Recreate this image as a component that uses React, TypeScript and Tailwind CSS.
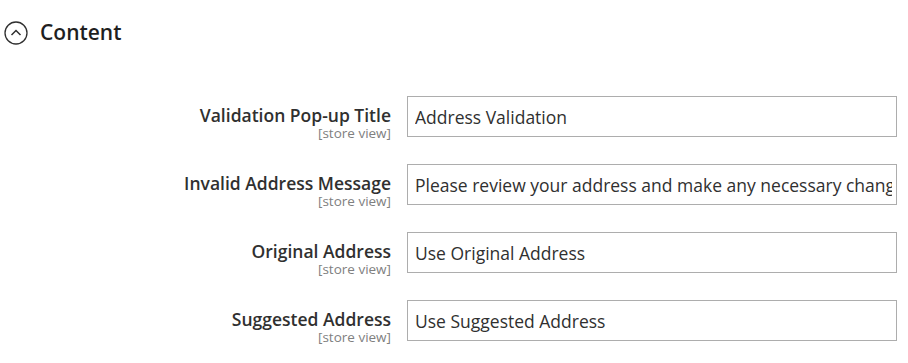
import React from "react";

const rows = [
  { label: "Validation Pop-up Title", value: "Address Validation" },
  { label: "Invalid Address Message", value: "Please review your address and make any necessary changes." },
  { label: "Original Address", value: "Use Original Address" },
  { label: "Suggested Address", value: "Use Suggested Address" },
];

// ── Collapsible header ────────────────────────────────────────
function SectionTitle() {
  return (
    <div className="flex items-center h-[24px] mt-[20px]">
      <svg width="24" height="24" viewBox="0 0 24 24" className="ml-[4px] mt-[2px] shrink-0">
        <circle cx="12" cy="12" r="11" fill="none" stroke="#303030" strokeWidth="1.3" />
        <path d="M7.5 14 L12 9.5 L16.5 14" fill="none" stroke="#303030" strokeWidth="1.5" />
      </svg>
      <span className="ml-[12px] text-[21px] leading-none font-semibold text-[#1f1f1f]">Content</span>
    </div>
  );
}

// ── Field row ─────────────────────────────────────────────────
function FieldRow({ label, value }: { label: string; value: string }) {
  return (
    <div className="flex h-[41px]">
      <div className="w-[391px] text-right pt-[9px]">
        <div className="text-[17.5px] leading-[21px] font-semibold text-[#303030] whitespace-nowrap">{label}</div>
        <div className="text-[13.5px] leading-[15px] text-[#808080]">[store view]</div>
      </div>
      <input
        readOnly
        value={value}
        className="ml-[16px] w-[490px] h-[41px] border border-[#adadad] bg-white pl-[7px] pr-[4px] text-[17.5px] text-[#303030] outline-none"
      />
    </div>
  );
}

export default function App() {
  return (
    <div className="w-[908px] h-[363px] bg-white overflow-hidden" style={{ fontFamily: '"Open Sans", sans-serif' }}>
      <SectionTitle />
      <div className="mt-[52px] flex flex-col gap-[27px]">
        {rows.map((r) => (
          <FieldRow key={r.label} label={r.label} value={r.value} />
        ))}
      </div>
    </div>
  );
}
